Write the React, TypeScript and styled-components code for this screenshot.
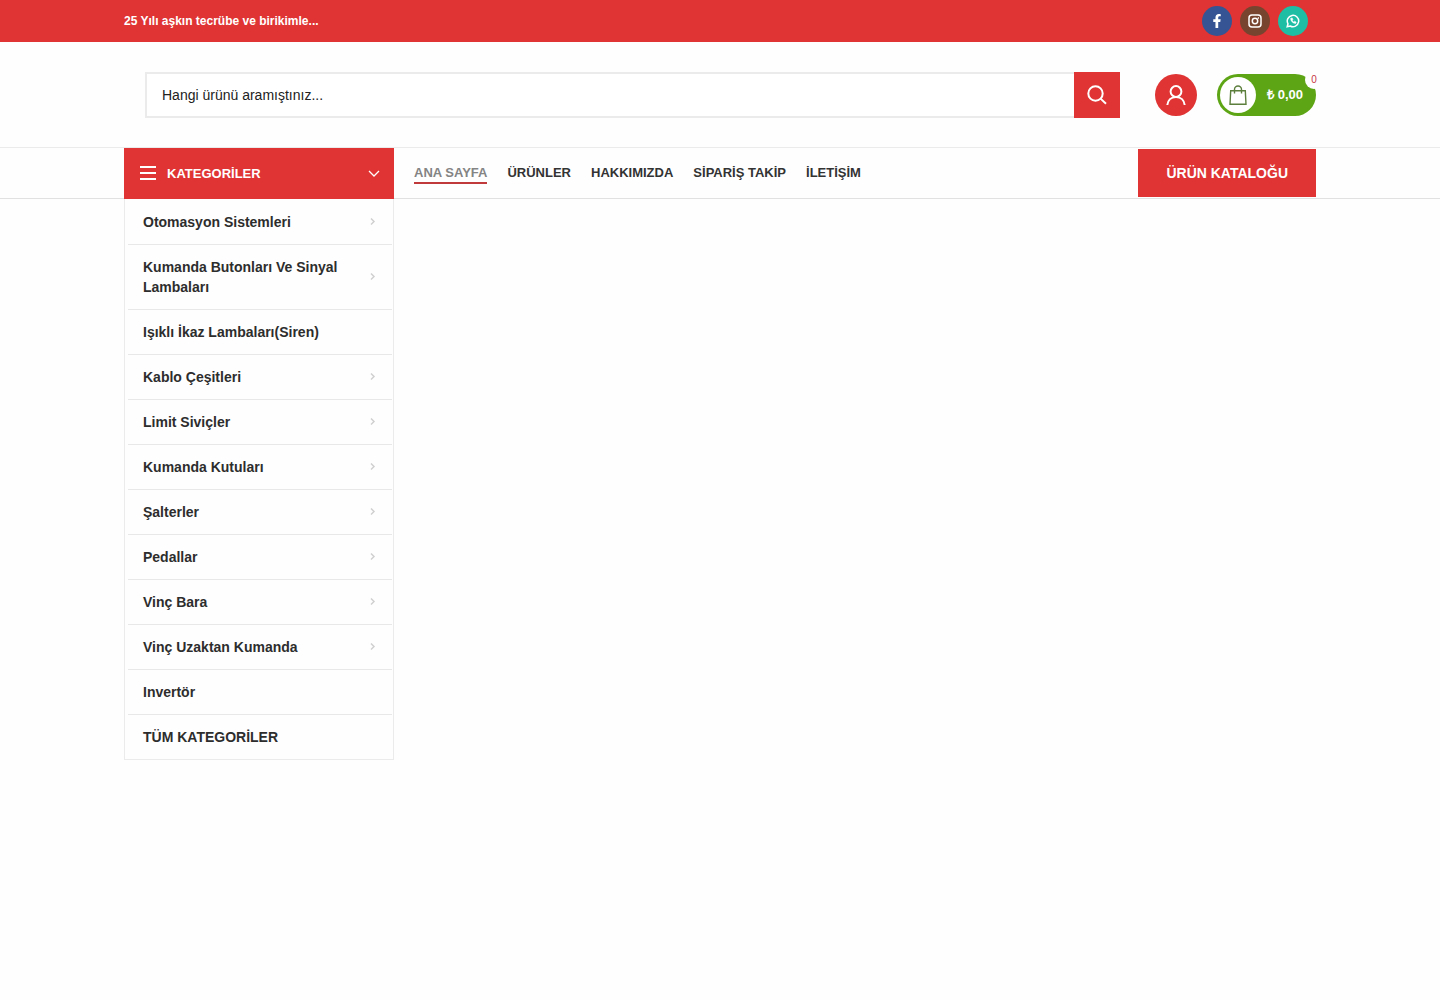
import React from "react";
import styled, { createGlobalStyle } from "styled-components";
import { FaFacebookF } from "react-icons/fa";

const GlobalStyle = createGlobalStyle`
  *, *::before, *::after { box-sizing: border-box; }
  body {
    margin: 0;
    background: #fefefe;
    color: #333;
    font-family: "Liberation Sans", Arial, sans-serif;
    font-size: 14px;
    line-height: 20px;
  }
  a { color: inherit; text-decoration: none; }
  button, input { font: inherit; }
`;

const RED = "#df3433";

const Page = styled.div`
  min-height: 100vh;
`;

const Container = styled.div`
  display: flex;
  align-items: center;
  width: 100%;
  max-width: 1222px;
  margin: 0 auto;
  padding: 0 15px;
`;

const TopBar = styled.div`
  background: ${RED};
  color: #fff;
  font-size: 12px;
  font-weight: 700;
`;

const TopBarInner = styled(Container)`
  justify-content: space-between;
  height: 42px;
`;

const Socials = styled.nav`
  display: flex;
  gap: 8px;
  padding-right: 8px;
`;

const SocialLink = styled.a<{ $color: string }>`
  display: flex;
  align-items: center;
  justify-content: center;
  width: 30px;
  height: 30px;
  border-radius: 50%;
  background: ${(p) => p.$color};
  color: #fff;
  font-size: 14px;
`;

const MainBar = styled.div`
  border-bottom: 1px solid #ebebeb;
`;

const MainInner = styled(Container)`
  height: 105px;
`;

const SearchForm = styled.form`
  display: flex;
  flex: 1;
  height: 46px;
  margin: 0 35px 0 21px;
`;

const SearchInput = styled.input`
  flex: 1;
  min-width: 0;
  padding: 0 15px;
  border: 2px solid #ebebeb;
  border-right: 0;
  border-radius: 0;
  background: #fff;
  color: #222;
  font-size: 14px;
  outline: none;
  &::placeholder { color: #222; opacity: 1; }
`;

const SearchButton = styled.button`
  display: flex;
  align-items: center;
  justify-content: center;
  width: 46px;
  padding: 0;
  border: 0;
  background: ${RED};
  color: #fff;
  cursor: pointer;
`;

const AccountLink = styled.a`
  display: flex;
  align-items: center;
  justify-content: center;
  width: 42px;
  height: 42px;
  margin-right: 20px;
  border-radius: 50%;
  background: ${RED};
  color: #fff;
`;

const CartLink = styled.a`
  position: relative;
  display: flex;
  align-items: center;
  gap: 11px;
  height: 42px;
  padding: 0 13px 0 3px;
  border-radius: 21px;
  background: #5ea515;
  color: #fff;
  font-size: 13px;
  font-weight: 700;
`;

const CartIcon = styled.span`
  display: flex;
  align-items: center;
  justify-content: center;
  width: 36px;
  height: 36px;
  border-radius: 50%;
  background: #fff;
  color: #5d7f3d;
`;

const CartCount = styled.span`
  position: absolute;
  top: -3px;
  right: -7px;
  width: 18px;
  height: 18px;
  border-radius: 50%;
  background: #fefefe;
  color: #c83746;
  font-size: 10px;
  font-weight: 400;
  line-height: 18px;
  text-align: center;
`;

const NavBar = styled.div`
  border-bottom: 1px solid #e1e1e1;
`;

const NavInner = styled(Container)`
  height: 50px;
`;

const Categories = styled.div`
  position: relative;
  align-self: flex-start;
  width: 270px;
`;

const CategoriesToggle = styled.button`
  display: flex;
  align-items: center;
  width: 100%;
  height: 51px;
  padding: 0 14px 0 16px;
  border: 0;
  background: ${RED};
  color: #fff;
  font-size: 13px;
  font-weight: 700;
  cursor: pointer;
  svg:last-child { margin-left: auto; }
`;

const ToggleLabel = styled.span`
  margin-left: 11px;
`;

const CategoryList = styled.ul`
  position: absolute;
  top: 100%;
  left: 0;
  right: 0;
  margin: 0;
  padding: 1px 1px 0 3px;
  border: solid #ebebeb;
  border-width: 0 1px 1px;
  list-style: none;
`;

const CategoryItem = styled.li`
  & + & { border-top: 1px solid #e8e8e8; }
`;

const CategoryLink = styled.a`
  display: flex;
  align-items: center;
  justify-content: space-between;
  gap: 24px;
  padding: 12px 15px;
  color: #2d2d2d;
  font-size: 14px;
  font-weight: 700;
  svg { flex: none; color: #d0d0d0; }
`;

const MainNav = styled.nav`
  display: flex;
  gap: 20px;
  margin-left: 20px;
`;

const NavLink = styled.a<{ $active?: boolean }>`
  padding-top: 2px;
  border-bottom: 2px solid ${(p) => (p.$active ? "#c0393b" : "transparent")};
  color: ${(p) => (p.$active ? "#848484" : "#333")};
  font-size: 13px;
  font-weight: 700;
  line-height: 18px;
`;

const CatalogLink = styled.a`
  margin-left: auto;
  padding: 14px 28px;
  background: ${RED};
  color: #fff;
  font-size: 14px;
  font-weight: 700;
`;

const Stroke = ({ size, children, width = 2, box = 24 }: {
  size: number; children: React.ReactNode; width?: number; box?: number;
}) => (
  <svg width={size} height={size} viewBox={`0 0 ${box} ${box}`} fill="none"
    stroke="currentColor" strokeWidth={width} aria-hidden="true">
    {children}
  </svg>
);

const InstagramIcon = () => (
  <Stroke size={14} box={14} width={1.5}>
    <rect x="1" y="1" width="12" height="12" rx="3" />
    <circle cx="7" cy="7" r="2.700" />
    <path d="M9.800 3.900h1.200" />
  </Stroke>
);

const WhatsappIcon = () => (
  <Stroke size={14} box={14} width={1.5}>
    <path d="M1.200 12.800l.8-3a5.700 5.700 0 1 1 2.200 2.200z" />
    <path d="M4.700 4.300c-.4 2.500 2.500 5.400 5 5.100l.5-1.400-1.700-.8-.8.7c-.7-.4-1.100-.9-1.400-1.500l.6-.8-.7-1.700z" fill="currentColor" strokeWidth="0.500" />
  </Stroke>
);

const socials = [
  { label: "Facebook", color: "#365493", icon: <FaFacebookF /> },
  { label: "Instagram", color: "#774430", icon: <InstagramIcon /> },
  { label: "WhatsApp", color: "#1ebea5", icon: <WhatsappIcon /> },
];

const categories = [
  { name: "Otomasyon Sistemleri", sub: true },
  { name: "Kumanda Butonları Ve Sinyal Lambaları", sub: true },
  { name: "Işıklı İkaz Lambaları(Siren)", sub: false },
  { name: "Kablo Çeşitleri", sub: true },
  { name: "Limit Siviçler", sub: true },
  { name: "Kumanda Kutuları", sub: true },
  { name: "Şalterler", sub: true },
  { name: "Pedallar", sub: true },
  { name: "Vinç Bara", sub: true },
  { name: "Vinç Uzaktan Kumanda", sub: true },
  { name: "Invertör", sub: false },
  { name: "TÜM KATEGORİLER", sub: false },
];

const pages = ["ANA SAYFA", "ÜRÜNLER", "HAKKIMIZDA", "SİPARİŞ TAKİP", "İLETİŞİM"];

export default function App() {
  return (
    <Page>
      <GlobalStyle />
      <header lang="tr">
        <TopBar>
          <TopBarInner>
            <span>25 Yılı aşkın tecrübe ve birikimle...</span>
            <Socials aria-label="Sosyal medya">
              {socials.map((s) => (
                <SocialLink key={s.label} href="#" aria-label={s.label} $color={s.color}>
                  {s.icon}
                </SocialLink>
              ))}
            </Socials>
          </TopBarInner>
        </TopBar>

        <MainBar>
          <MainInner>
            <SearchForm role="search">
              <SearchInput type="text" aria-label="Ürün ara" placeholder="Hangi ürünü aramıştınız..." />
              <SearchButton type="submit" aria-label="Ara">
                <Stroke size={20} box={20} width={2}>
                  <circle cx="8.500" cy="8.500" r="7.200" />
                  <path d="M13.600 13.600l5.400 5.200" />
                </Stroke>
              </SearchButton>
            </SearchForm>
            <AccountLink href="#" aria-label="Hesabım">
              <Stroke size={20} box={20} width={2}>
                <circle cx="10" cy="6.500" r="5.400" />
                <path d="M1.300 20c.5-4.800 3.800-8.100 8.700-8.100s8.200 3.300 8.700 8.100" />
              </Stroke>
            </AccountLink>
            <CartLink href="#">
              <CartIcon>
                <Stroke size={20} box={20} width={1.4}>
                  <path d="M2.700 5.700h14.600l.7 13.500h-16z" />
                  <path d="M6.500 8.500V4.500a3.500 3.500 0 0 1 7 0v4" />
                </Stroke>
              </CartIcon>
              <span>₺ 0,00</span>
              <CartCount>0</CartCount>
            </CartLink>
          </MainInner>
        </MainBar>

        <NavBar>
          <NavInner>
            <Categories>
              <CategoriesToggle type="button" aria-expanded="true">
                <Stroke size={16} box={16}>
                  <path d="M0 1h16M0 7h16M0 13h16" />
                </Stroke>
                <ToggleLabel>KATEGORİLER</ToggleLabel>
                <Stroke size={12} box={12} width={1.3}>
                  <path d="M1 3l5 5 5-5" />
                </Stroke>
              </CategoriesToggle>
              <CategoryList>
                {categories.map((c) => (
                  <CategoryItem key={c.name}>
                    <CategoryLink href="#">
                      {c.name}
                      {c.sub && (
                        <Stroke size={8} box={8} width={1.5}>
                          <path d="M2 0.500l3 3-3 3" />
                        </Stroke>
                      )}
                    </CategoryLink>
                  </CategoryItem>
                ))}
              </CategoryList>
            </Categories>
            <MainNav aria-label="Ana menü">
              {pages.map((p, i) => (
                <NavLink key={p} href="#" $active={i === 0}>{p}</NavLink>
              ))}
            </MainNav>
            <CatalogLink href="#">ÜRÜN KATALOĞU</CatalogLink>
          </NavInner>
        </NavBar>
      </header>
    </Page>
  );
}
